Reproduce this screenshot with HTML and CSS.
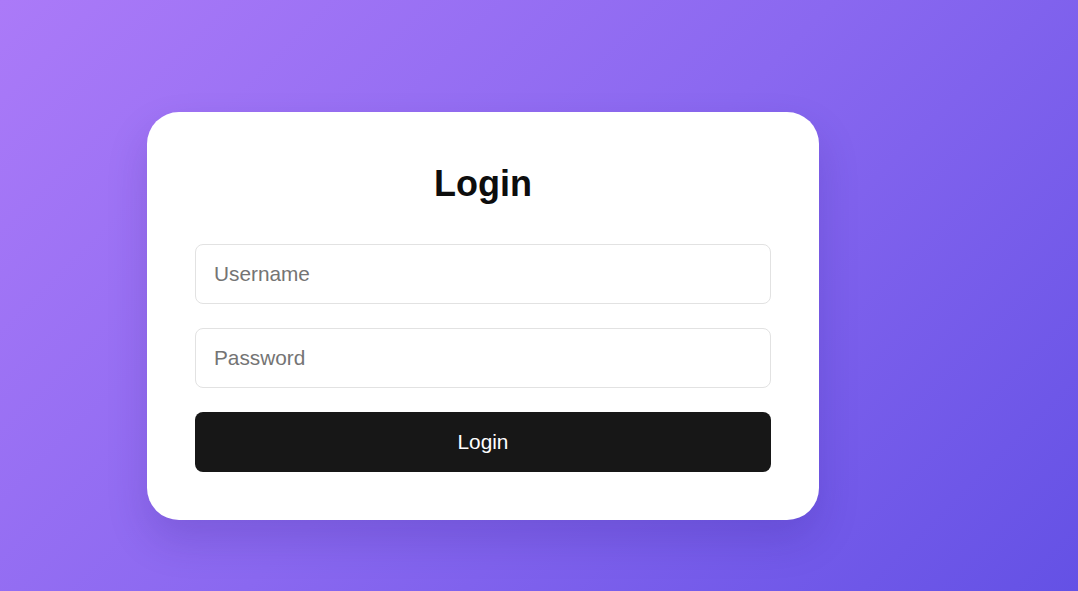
FILE: index.html
```html
<!DOCTYPE html>
<html lang="en">
<head>
<meta charset="utf-8">
<title>Login</title>
<link rel="stylesheet" href="styles.css">
</head>
<body>
<main class="page">
  <form class="card">
    <h1 class="title">Login</h1>
    <input class="field" type="text" placeholder="Username">
    <input class="field" type="password" placeholder="Password">
    <button class="btn" type="button">Login</button>
  </form>
</main>
</body>
</html>
```

FILE: styles.css
```css
html, body {
  margin: 0;
  height: 100%;
}
body {
  background: linear-gradient(135deg, #ab7af8 0%, #8a68f0 50%, #6451e5 100%);
  font-family: "Liberation Sans", Arial, sans-serif;
  overflow: hidden;
}
.page {
  padding: 112px 0 0 147px;
}
.card {
  box-sizing: border-box;
  width: 672px;
  height: 408px;
  background: #ffffff;
  border-radius: 32px;
  padding: 48px;
  display: flex;
  flex-direction: column;
  gap: 24px;
  box-shadow: 0 20px 40px rgba(40, 20, 120, 0.18);
}
.title {
  margin: 2px 0 14px;
  text-align: center;
  font-size: 36px;
  font-weight: 700;
  color: #0d0d0d;
  line-height: 44px;
}
.field {
  box-sizing: border-box;
  height: 60px;
  width: 100%;
  border: 1px solid #e2e2e2;
  border-radius: 8px;
  padding: 0 18px;
  font-family: inherit;
  font-size: 20.8px;
  color: #222;
  outline: none;
}
.field::placeholder {
  color: #747474;
}
.btn {
  height: 60px;
  border: none;
  border-radius: 8px;
  background: #171717;
  color: #ffffff;
  font-family: inherit;
  font-size: 20.8px;
}
```
